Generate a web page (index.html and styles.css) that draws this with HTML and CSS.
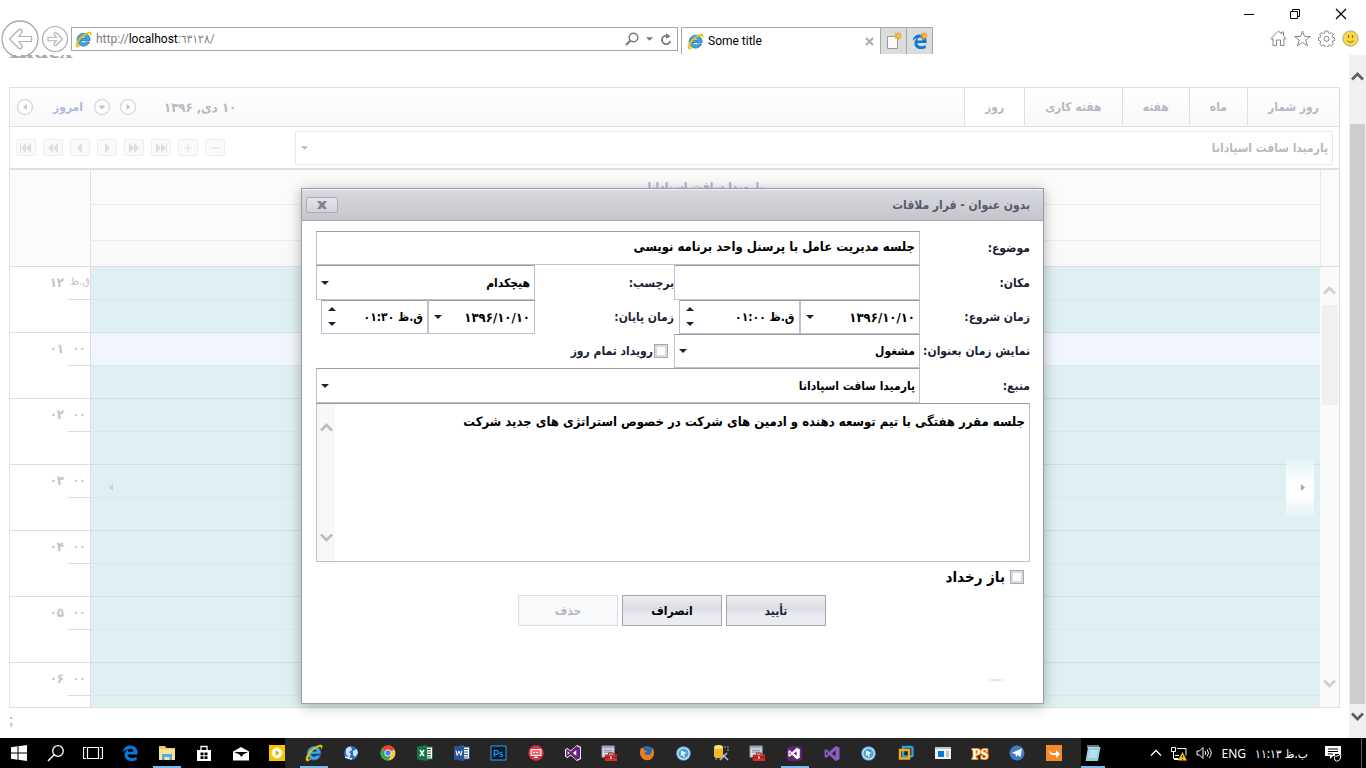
FILE: index.html
```html
<!DOCTYPE html>
<html lang="fa">
<head>
<meta charset="utf-8">
<title>Some title</title>
<link rel="stylesheet" href="styles.css">
</head>
<body>
<svg class="defs" aria-hidden="true">
  <defs>
    <symbol id="ie" viewBox="0 0 18 18"><path d="M9 2.400a6.800 6.800 0 1 0 6.400 9.200h-4a3.100 3.100 0 0 1-5.400-1.600h9.900A6.800 6.800 0 0 0 9 2.400zM6.100 7.500a3 3 0 0 1 5.800 0z" fill="#3fa9e0" stroke="#2277b5" stroke-width=".9"/><path d="M1.600 16.800C-.4 14.700 3 8 8.500 4.200 12 1.700 16 .2 17 1.600c.6 1-.2 2.500-.7 3.400C17 2.600 15 2 11.400 4 6 7 1.800 13 3.200 15.300c.5.800 1.800.4 2.600 0-1.700 1.200-3.300 2.200-4.200 1.500z" fill="#fbc912" stroke="#e9b400" stroke-width=".6"/></symbol>
    <symbol id="edge" viewBox="0 0 16 16"><path d="M.6 7.300C1.200 3 4.200.5 8.300.5c4.500 0 7.200 3.200 7.200 7v2.100H5.600c.1 2.300 2 3.500 4.500 3.500 1.700 0 3.100-.4 4.500-1.300v3.100c-1.500.8-3.100 1.100-5 1.100-4.400 0-7-2.600-7-6.200 0-2.400 1.200-4.400 3.400-5.400C3.600 4.700 1.600 5.600.6 7.300zM5.700 6.800h5.600c0-2-1-3-2.800-3S6 5 5.700 6.800z" fill="#0a78d7"/></symbol>
    <symbol id="spark" viewBox="0 0 8 8"><path d="M4 0v8M0 4h8M1.200 1.200l5.600 5.600M6.800 1.200L1.200 6.800" stroke="#f0981c" stroke-width="1.200"/><circle cx="4" cy="4" r="1.600" fill="#ffc545"/></symbol>
    <symbol id="down" viewBox="0 0 8 4"><path d="M0 0h8L4 4z" fill="currentColor"/></symbol>
    <symbol id="up" viewBox="0 0 8 4"><path d="M0 4h8L4 0z" fill="currentColor"/></symbol>
    <symbol id="chev-down" viewBox="0 0 13 10"><path d="M1 1.500l5.500 5.500L12 1.500" fill="none" stroke="currentColor" stroke-width="2.800"/></symbol>
    <symbol id="chev-up" viewBox="0 0 13 10"><path d="M1 8.500L6.500 3 12 8.500" fill="none" stroke="currentColor" stroke-width="2.800"/></symbol>
    <symbol id="toolbox" viewBox="0 0 18 18"><path d="M1 1h13v12H1z" fill="#dfe3ea" stroke="#7f8896"/><path d="M1 1h13v2.500H1z" fill="#9aa5b8"/><path d="M3 5.500h9M3 7.500h9" stroke="#77818f"/><path d="M4 10h13v7H4z" fill="#d22f2b"/><path d="M8 10V8.500h5V10M4 13h13" stroke="#7a0f0d" fill="none"/><path d="M9.500 12h2v2.500h-2z" fill="#f3d9d8"/></symbol>
    <symbol id="disc" viewBox="0 0 18 18"><circle cx="9" cy="9" r="7.800" fill="#4d9fd0"/><circle cx="9" cy="9" r="6" fill="none" stroke="#cfe6f4" stroke-width="1.300"/><path d="M6.500 5.500l6 3.300-3 .8 1 2.900-1.500.5-1-2.700-2 1.700z" fill="#e8f4fb"/></symbol>
    <symbol id="vs" viewBox="0 0 18 18"><path d="M12.800 1L17 3v12l-4.200 2-6.600-6.200L3 13.500 1.200 12.700V5.300L3 4.500l3.200 2.700zM12.700 5.800L8.700 9l4 3.200zM3 7v4l2-2z" fill="currentColor" fill-rule="evenodd"/></symbol>
  </defs>
</svg>

<header class="chrome">
  <div class="caption">
    <button class="plain" aria-label="Minimize"><svg width="12" height="12"><path d="M1 6.500h10" stroke="#000"/></svg></button>
    <button class="plain" aria-label="Restore"><svg width="12" height="12"><path d="M1.500 3.500h7v7h-7zM3.500 3.500v-2h7v7h-2" stroke="#000" fill="none"/></svg></button>
    <button class="plain" aria-label="Close"><svg width="12" height="12"><path d="M1 1l10 10M11 1L1 11" stroke="#000" stroke-width="1.200"/></svg></button>
  </div>
  <div class="navbar">
    <button class="plain" aria-label="Back"><svg width="38" height="38"><circle cx="19" cy="19" r="18" fill="#fff" stroke="#aaa" stroke-width="1.300"/><path d="M8.500 19l9-9c2-2 5 1 3 3L18 16.500h12.500v5H18l2.500 3.500c2 2-1 5-3 3z" fill="none" stroke="#b0b0b0" stroke-width="1.200"/></svg></button>
    <button class="plain" aria-label="Forward"><svg width="28" height="28"><circle cx="14" cy="14" r="12.500" fill="#fff" stroke="#aaa" stroke-width="1.200"/><path d="M21.500 14l-6-6c-1.500-1.500-3.500.6-2 2l2 2.200H7v3.600h8.500l-2 2.200c-1.500 1.400.5 3.500 2 2z" fill="none" stroke="#b0b0b0" stroke-width="1.100"/></svg></button>
    <div class="address">
      <svg width="17" height="17"><use href="#ie"/></svg>
      <span class="url">http://<b>localhost</b>:٦٣١٢٨/</span>
      <button class="plain" aria-label="Search"><svg width="14" height="14"><circle cx="8.500" cy="5.500" r="4.300" fill="none" stroke="#777" stroke-width="1.500"/><path d="M5.500 8.500L1 13" stroke="#777" stroke-width="2"/></svg></button>
      <button class="plain" aria-label="Search options"><svg class="gray" width="7" height="4"><use href="#down"/></svg></button>
      <button class="plain" aria-label="Refresh"><svg width="12" height="13"><path d="M8.500 3.200A4.300 4.300 0 1 0 10.400 8" fill="none" stroke="#777" stroke-width="1.700"/><path d="M6 0l4.500 3.700L6 5.500z" fill="#777"/></svg></button>
    </div>
    <div class="tab">
      <svg width="17" height="17"><use href="#ie"/></svg>
      <span>Some title</span>
      <button class="plain" aria-label="Close tab"><svg width="9" height="9"><path d="M1 1l7 7M8 1L1 8" stroke="#aaa" stroke-width="1.900"/></svg></button>
    </div>
    <button class="newtab" aria-label="New tab"><svg width="16" height="18"><path d="M1.500 4.500h10v12h-10z" fill="#fafafa" stroke="#999"/><svg x="8" y="0" width="8" height="8"><use href="#spark"/></svg></svg></button>
    <button class="newtab" aria-label="Open in Edge"><svg width="16" height="18"><svg y="2" width="15" height="15"><use href="#edge"/></svg><svg x="8" y="0" width="8" height="8"><use href="#spark"/></svg></svg></button>
    <div class="tools">
      <button class="plain" aria-label="Home"><svg width="17" height="17"><path d="M.8 8.500L8.500 1l3 3V2h2v4l2.700 2.500-1 1-1.200-1V15.500h-3.500V10h-4v5.500H3V8.500l-1.200 1z" fill="none" stroke="#888"/></svg></button>
      <button class="plain" aria-label="Favorites"><svg width="17" height="17"><path d="M8.500 1l2 5.500h5.800l-4.600 3.600 1.800 5.700-5-3.500-5 3.500 1.800-5.700L.7 6.500h5.800z" fill="none" stroke="#888"/></svg></button>
      <button class="plain" aria-label="Settings"><svg width="17" height="17"><path d="M7 1h3l.4 2 1.300.6 1.700-1.200 2 2-1.200 1.800.6 1.300 1.900.4v2.500l-1.900.5-.6 1.400 1.100 1.700-1.900 1.900-1.700-1.100-1.300.5-.4 1.900H7l-.4-1.900-1.300-.5-1.700 1.100-1.900-1.900 1.100-1.700-.6-1.400-1.800-.5V7.900l1.800-.4.600-1.300L1.700 4.400l2-2 1.600 1.200L6.600 3z" fill="none" stroke="#888"/><circle cx="8.500" cy="8.800" r="2.500" fill="none" stroke="#888"/></svg></button>
      <button class="plain" aria-label="Feedback"><svg width="17" height="17"><circle cx="8.500" cy="8.500" r="7.600" fill="#fbd93f" stroke="#a9a183"/><path d="M6.500 5v3M10.500 5v3" stroke="#8a7420" stroke-width="1.300"/><path d="M5 10.500q3.500 3.500 7 0" fill="none" stroke="#8a7420"/></svg></button>
    </div>
  </div>
</header>

<main class="viewport">
  <div class="page">
    <h1 class="heading">Index</h1>
    <section class="scheduler" dir="rtl">
      <div class="toolbar">
        <nav class="views">
          <button>روز شمار</button><button>ماه</button><button>هفته</button><button>هفته کاری</button><button class="active">روز</button>
        </nav>
        <div class="daynav" dir="ltr">
          <button class="plain" aria-label="Previous"><svg width="18" height="18"><circle cx="9" cy="9" r="7.500" fill="#fff" stroke="#dcdcdc" stroke-width="1.500"/><path d="M11 6v6L7 9z" fill="#c4c4c8"/></svg></button>
          <a href="#" dir="rtl">امروز</a>
          <button class="plain" aria-label="Choose date"><svg width="18" height="18"><circle cx="9" cy="9" r="7.500" fill="#fff" stroke="#dcdcdc" stroke-width="1.500"/><path d="M5.500 7.500h7l-3.500 4z" fill="#c4c4c8"/></svg></button>
          <button class="plain" aria-label="Next"><svg width="18" height="18"><circle cx="9" cy="9" r="7.500" fill="#fff" stroke="#dcdcdc" stroke-width="1.500"/><path d="M7.500 6v6L11.500 9z" fill="#c4c4c8"/></svg></button>
          <span class="date" dir="rtl">۱۰ دی, ۱۳۹۶</span>
        </div>
      </div>
      <div class="resources">
        <div class="combo">
          <select aria-label="منبع"><option>پارمیدا سافت اسپادانا</option></select>
          <svg width="7" height="4"><use href="#down"/></svg>
        </div>
        <div class="pager" dir="ltr">
          <button aria-label="First"><svg width="14" height="10"><path d="M1 0h1v10H1zM7 0v10L2 5zM12 0v10L7 5z"/></svg></button>
          <button aria-label="Previous page"><svg width="14" height="10"><path d="M7 0v10L2 5zM12 0v10L7 5z"/></svg></button>
          <button aria-label="Previous"><svg width="14" height="10"><path d="M9 0v10L4 5z"/></svg></button>
          <button aria-label="Next"><svg width="14" height="10"><path d="M5 0v10l5-5z"/></svg></button>
          <button aria-label="Next page"><svg width="14" height="10"><path d="M2 0v10l5-5zM7 0v10l5-5z"/></svg></button>
          <button aria-label="Last"><svg width="14" height="10"><path d="M2 0v10l5-5zM7 0v10l5-5zM12 0h1v10h-1z"/></svg></button>
          <button aria-label="Add"><svg width="14" height="10"><path d="M3 4.500h8v1H3zM6.500 1h1v8h-1z"/></svg></button>
          <button aria-label="Remove"><svg width="14" height="10"><path d="M3 4.500h8v1H3z"/></svg></button>
        </div>
      </div>
      <div class="bands" dir="ltr">
        <div class="corner"></div>
        <div class="bandlist"><div dir="rtl">پارمیدا سافت اسپادانا</div><div></div><div></div></div>
        <div class="bandend"></div>
      </div>
      <div class="body" dir="ltr">
        <table class="hours">
          <tr><th rowspan="2">۱۲</th><td class="min ap" dir="rtl">ق.ظ</td><td class="slot"></td></tr>
          <tr><td class="min"></td><td class="slot full"></td></tr>
          <tr><th rowspan="2">۰۱</th><td class="min">۰۰</td><td class="slot picked"></td></tr>
          <tr><td class="min"></td><td class="slot full"></td></tr>
          <tr><th rowspan="2">۰۲</th><td class="min">۰۰</td><td class="slot"></td></tr>
          <tr><td class="min"></td><td class="slot full"></td></tr>
          <tr><th rowspan="2">۰۳</th><td class="min">۰۰</td><td class="slot"></td></tr>
          <tr><td class="min"></td><td class="slot full"></td></tr>
          <tr><th rowspan="2">۰۴</th><td class="min">۰۰</td><td class="slot"></td></tr>
          <tr><td class="min"></td><td class="slot full"></td></tr>
          <tr><th rowspan="2">۰۵</th><td class="min">۰۰</td><td class="slot"></td></tr>
          <tr><td class="min"></td><td class="slot full"></td></tr>
          <tr><th rowspan="2">۰۶</th><td class="min">۰۰</td><td class="slot"></td></tr>
          <tr><td class="min"></td><td class="slot full"></td></tr>
        </table>
        <div class="scroll pale"><svg width="13" height="10"><use href="#chev-up"/></svg><div class="thumb"></div><svg width="13" height="10"><use href="#chev-down"/></svg></div>
        <button class="jump prev" aria-label="Previous appointment"><svg width="4" height="7"><path d="M4 0v7L0 3.500z" fill="#c5d2d4"/></svg></button>
        <button class="jump next" aria-label="Next appointment"><svg width="4" height="7"><path d="M0 0v7l4-3.500z" fill="#a8a8b0"/></svg></button>
      </div>
    </section>
    <p class="tail">;</p>
  </div>

  <div class="overlay">
    <form class="dialog" dir="rtl" role="dialog" aria-labelledby="dlg-title">
      <div class="dlg-head">
        <h2 id="dlg-title">بدون عنوان - قرار ملاقات</h2>
        <button type="button" class="close" aria-label="بستن"><svg width="10" height="8"><path d="M0 0h3.500L5 2l1.500-2H10L7 4l3 4H6.500L5 6 3.500 8H0l3-4z" fill="#83838f"/></svg></button>
      </div>
      <div class="fields">
        <label for="subject">موضوع:</label>
        <div class="box wide subject"><input id="subject" type="text" value="جلسه مدیریت عامل با پرسنل واحد برنامه نویسی"></div>

        <label for="place">مکان:</label>
        <div class="box"><input id="place" type="text"></div>
        <label for="tag">برچسب:</label>
        <div class="box pick"><select id="tag"><option>هیچکدام</option></select><svg width="8" height="4"><use href="#down"/></svg></div>

        <label for="start">زمان شروع:</label>
        <div class="pair">
          <div class="box date-box"><input id="start" type="text" value="۱۳۹۶/۱۰/۱۰"><button type="button" class="drop" aria-label="تقویم"><svg width="8" height="4"><use href="#down"/></svg></button></div>
          <div class="box time-box"><input type="text" aria-label="ساعت شروع" value="ق.ظ ۰۱:۰۰"><span class="spin"><button type="button" class="plain" aria-label="بیشتر"><svg width="8" height="4"><use href="#up"/></svg></button><button type="button" class="plain" aria-label="کمتر"><svg width="8" height="4"><use href="#down"/></svg></button></span></div>
        </div>
        <label for="end">زمان پایان:</label>
        <div class="pair">
          <div class="box date-box"><input id="end" type="text" value="۱۳۹۶/۱۰/۱۰"><button type="button" class="drop" aria-label="تقویم"><svg width="8" height="4"><use href="#down"/></svg></button></div>
          <div class="box time-box"><input type="text" aria-label="ساعت پایان" value="ق.ظ ۰۱:۳۰"><span class="spin"><button type="button" class="plain" aria-label="بیشتر"><svg width="8" height="4"><use href="#up"/></svg></button><button type="button" class="plain" aria-label="کمتر"><svg width="8" height="4"><use href="#down"/></svg></button></span></div>
        </div>

        <label for="showas">نمایش زمان بعنوان:</label>
        <div class="box pick"><select id="showas"><option>مشغول</option></select><svg width="8" height="4"><use href="#down"/></svg></div>
        <div class="check allday"><input id="allday" type="checkbox"><label for="allday">رویداد تمام روز</label></div>

        <label for="resource">منبع:</label>
        <div class="box wide pick"><select id="resource"><option>پارمیدا سافت اسپادانا</option></select><svg width="8" height="4"><use href="#down"/></svg></div>

        <div class="box memo">
          <textarea aria-label="توضیحات">جلسه مقرر هفتگی با تیم توسعه دهنده و ادمین های شرکت در خصوص استراتژی های جدید شرکت</textarea>
          <div class="scroll"><svg width="13" height="10"><use href="#chev-up"/></svg><svg width="13" height="10"><use href="#chev-down"/></svg></div>
        </div>
      </div>
      <div class="check recur"><input id="recur" type="checkbox"><label for="recur">باز رخداد</label></div>
      <div class="actions">
        <button type="submit">تأیید</button><button type="button" class="cancel">انصراف</button><button type="button" disabled>حذف</button>
      </div>
      <div class="status"></div>
    </form>
  </div>

  <div class="pagescroll"><svg width="13" height="10"><use href="#chev-up"/></svg><div class="thumb"></div><svg width="13" height="10"><use href="#chev-down"/></svg></div>
</main>

<footer class="taskbar">
  <button aria-label="Start"><svg width="16" height="16"><path d="M0 2.300L6.500 1.300V7.500H0zM7.500 1.200L16 0v7.500H7.500zM0 8.500h6.500v6.200L0 13.800zM7.500 8.500H16V16l-8.500-1.200z" fill="#fff"/></svg></button>
  <button aria-label="Search"><svg width="18" height="18"><circle cx="11" cy="7" r="5.300" fill="none" stroke="#fff" stroke-width="1.300"/><path d="M7.200 10.800L1 17" stroke="#fff" stroke-width="1.500"/></svg></button>
  <button aria-label="Task view"><svg width="20" height="16"><path d="M4.500 2.500h11v11h-11zM3 2.500H.5v11H3M17 2.500h2.500v11H17" fill="none" stroke="#fff" stroke-width="1.200"/></svg></button>
  <button aria-label="Edge"><svg width="16" height="16"><use href="#edge"/></svg></button>
  <button class="running" aria-label="File Explorer"><svg width="18" height="16"><path d="M1 1h6l1.500 2H17v12H1z" fill="#f4c95c"/><path d="M1 4h16v11H1z" fill="#fde294"/><path d="M4 15V9h10v6h-2.500v-3h-5v3z" fill="#4aaee8"/></svg></button>
  <button aria-label="Store"><svg width="16" height="17"><path d="M1 5h14v11H1z" fill="#fff"/><path d="M5 5V1.500h6V5" fill="none" stroke="#fff" stroke-width="1.300"/><path d="M4.500 7.500h3v2.700h-3zM8.500 7.500h3v2.700h-3zM4.500 11.200h3V14h-3zM8.500 11.200h3V14h-3z" fill="#000"/></svg></button>
  <button aria-label="Mail"><svg width="16" height="15"><path d="M0 5.500L8 1l8 4.500V14.500H0z" fill="#fff"/><path d="M1 6h14l-5 2.500-1 2H8l-1.500-2z" fill="#000"/></svg></button>
  <button class="clipped" aria-label="Media"><svg width="16" height="16"><path d="M0 0h16v16H0z" fill="#f5c400"/><circle cx="8" cy="8" r="5" fill="#fff" stroke="#fff4b8"/><path d="M6.500 5l4 3-4 3z" fill="#e0b000"/></svg></button>
  <div class="quick">
    <button class="running" aria-label="Internet Explorer"><svg width="18" height="18"><use href="#ie"/></svg></button>
    <button aria-label="Globe"><svg width="16" height="16"><circle cx="8" cy="8" r="7" fill="#2b6fc4"/><path d="M3 4q3-3 5-2l1 3-3 2 2 2-2 4-3-4zM10 6l4-2 1 4-3 4-2-2z" fill="#cfe2f2"/><path d="M2 12l7 2" stroke="#e9f1f8" stroke-width="1.500"/></svg></button>
    <button aria-label="Chrome"><svg width="16" height="16"><circle cx="8" cy="8" r="7.500" fill="#fcc934"/><path d="M8 8L1.500 4.250A7.500 7.500 0 0 1 14.500 4.250z" fill="#ea4335"/><path d="M8 8L1.500 4.250A7.500 7.500 0 0 0 8 15.500l3.200-5.500z" fill="#34a853"/><circle cx="8" cy="8" r="3.500" fill="#fff"/><circle cx="8" cy="8" r="2.700" fill="#4285f4"/></svg></button>
    <button aria-label="Excel"><svg width="16" height="16"><path d="M8 2h7.500v12H8z" fill="#fff" stroke="#1f7246"/><path d="M10 4.500h4M10 7h4M10 9.500h4M10 12h4" stroke="#1f7246"/><path d="M0 1.500L10 0v16L0 14.500z" fill="#1f7246"/><path d="M3 5l4 6M7 5l-4 6" stroke="#fff" stroke-width="1.400"/></svg></button>
    <button aria-label="Word"><svg width="16" height="16"><path d="M8 2h7.500v12H8z" fill="#fff" stroke="#2a5699"/><path d="M10 4.500h4M10 7h4M10 9.500h4M10 12h4" stroke="#2a5699"/><path d="M0 1.500L10 0v16L0 14.500z" fill="#2a5699"/><path d="M2 5.500l1.200 5 1.800-4.500 1.800 4.500L8 5.500" stroke="#fff" fill="none"/></svg></button>
    <button aria-label="Photoshop"><svg width="17" height="16"><path d="M1 1h15v14H1z" fill="#001d33" stroke="#2fa8e8"/><text x="3" y="12" font-family="Lato" font-size="10" fill="#38b4f5">Ps</text></svg></button>
    <button aria-label="Remote"><svg width="16" height="16"><circle cx="8" cy="8" r="7.700" fill="#d9333f"/><path d="M3 4.500h10v6H3zM6 12.500h4M8 10.500v2" fill="#e77079" stroke="#fff"/><path d="M5 7.500h6" stroke="#fff" stroke-dasharray="2 1"/></svg></button>
    <button aria-label="Visual Studio 2012"><svg width="18" height="18"><path d="M13 1l4 2v12l-4 2-6.500-5.500L3.500 14 1 12.500v-7L3.500 4l3 2.500z" fill="#fff"/><svg x="1" y="1" width="16" height="16" color="#68217a"><use href="#vs"/></svg></svg></button>
    <button aria-label="Configuration"><svg width="17" height="17"><use href="#toolbox"/></svg></button>
    <button aria-label="Firefox"><svg width="16" height="16"><circle cx="8" cy="8" r="7" fill="#2a66b1"/><path d="M2 3C0 7 1 12 4.500 14.200 9 17 15 14 15 8c0-3-1-4.500-2.500-5.500C13.500 5 13 8 11 9.500 8.500 11 6 9.500 5.500 8L8 6.500 5 5 4 3z" fill="#ee7c1b"/></svg></button>
    <button aria-label="Agent"><svg width="17" height="17"><use href="#disc"/></svg></button>
    <button aria-label="Database"><svg width="18" height="18"><path d="M2 3v9c0 3 9 3 9 0V3z" fill="#f3b72a"/><ellipse cx="6.500" cy="3" rx="4.500" ry="2" fill="#ffe07a"/><path d="M12 3h4v4M3 15h3" stroke="#4e9a4e" stroke-width="1.500" stroke-dasharray="2 1" fill="none"/><path d="M8 16l7-7M10 10l6 6" stroke="#b6bcc4" stroke-width="1.600"/></svg></button>
    <button aria-label="Configuration 2"><svg width="17" height="17"><use href="#toolbox"/></svg></button>
    <button class="running" aria-label="Visual Studio"><svg width="17" height="17"><path d="M12 1l4 2v11l-4 2H3L1 13V4l2-2z" fill="#68217a"/><svg x="1" y="2" width="14" height="13" color="#fff"><use href="#vs"/></svg></svg></button>
    <button aria-label="Visual Studio 2017"><svg class="violet" width="18" height="17"><use href="#vs"/></svg></button>
    <button aria-label="Agent 2"><svg width="17" height="17"><use href="#disc"/></svg></button>
    <button aria-label="VMware"><svg width="16" height="16"><path d="M5 2h8q1.500 0 1.500 1.500V10q0 1.500-1.500 1.500H5z" fill="none" stroke="#28a6d4" stroke-width="2.400"/><path d="M2 5v8.500h9V5z" fill="none" stroke="#f6a821" stroke-width="2.400"/></svg></button>
    <button aria-label="Window"><svg width="16" height="12"><path d="M0 0h16v12H0z" fill="#f3f3f3"/><path d="M0 0h16v2H0z" fill="#bfc5cc"/><path d="M3 4h6v6H3z" fill="#0a78d7"/><path d="M11 5h3M11 7h3M11 9h3" stroke="#999"/></svg></button>
    <button aria-label="PS"><svg width="18" height="18"><text x="1" y="15" font-family="Liberation Serif" font-weight="bold" font-size="14" fill="#fff" stroke="#f08a1c" stroke-width="2" paint-order="stroke">PS</text></svg></button>
    <button aria-label="Telegram"><svg width="16" height="16"><circle cx="8" cy="8" r="7.500" fill="#3c7ec9"/><path d="M2.500 8L13 3.500 11.500 12 8.500 10 7 12.200 6.500 9z" fill="#fff"/></svg></button>
    <button aria-label="Arrow"><svg width="16" height="16"><path d="M0 0h16v16H0z" fill="#f48b28"/><path d="M3 5q1 3 4 3h3V5l4 4-4 4v-3H7Q3 10 3 5z" fill="#fff"/></svg></button>
  </div>
  <button class="notes running" aria-label="Notepad"><svg width="16" height="17"><path d="M3 2h12.500L13 16H.5z" fill="#8fd0dd"/><path d="M4 6h9M3.700 8h9M3.300 10h9M3 12h9" stroke="#d8f0f4"/><path d="M3 0v3M5 0v3M7 0v3M9 0v3M11 0v3M13 0v3" stroke="#e8e8e8"/></svg></button>
  <div class="tray">
    <svg width="12" height="8"><path d="M1 6.500l5-5 5 5" fill="none" stroke="#fff" stroke-width="1.300"/></svg>
    <svg width="16" height="15"><path d="M.5 1.500h4v4h-4zM6 2.500h9v7M4 9.500h4M2.500 5.500v7h5M3 13.500h5" fill="none" stroke="#fff"/><path d="M11.500 6L16 14.500H7z" fill="#fdc116"/><path d="M11.500 9v3M11.500 13v1" stroke="#3d2c00"/></svg>
    <svg width="17" height="14"><path d="M1 5h2.500L7 1.500v11L3.500 9H1z" fill="none" stroke="#fff"/><path d="M9 5q1.500 2 0 4M11 3.500q3 3.500 0 7M13 2q4.500 5 0 10" fill="none" stroke="#fff"/></svg>
    <span>ENG</span>
    <time dir="rtl">ب.ظ ۱۱:۱۳</time>
    <svg class="notice" width="17" height="17"><path d="M0 1h16v10H8l-3 3v-3H0z" fill="#fff"/><path d="M3 4h10M3 6.500h10M3 9h5" stroke="#000"/><path d="M10 9h6v7h-6z" fill="#000"/><path d="M10 15q-2-4 2-4 3 0 3-3 2 6-2 8-2 .6-3-1z" fill="none" stroke="#fff"/></svg>
    <i class="peek"></i>
  </div>
</footer>
</body>
</html>
```
FILE: styles.css
```css
* { box-sizing: border-box; }
body {
  margin: 0;
  height: 100vh;
  display: flex;
  flex-direction: column;
  background: #fff;
  font-family: "DejaVu Sans Condensed", "DejaVu Sans", sans-serif;
  font-size: 12px;
  overflow: hidden;
}
button, input, select, textarea { font: inherit; color: inherit; margin: 0; }
svg { display: block; flex: none; }
.defs { position: absolute; width: 0; height: 0; }
.plain { border: 0; padding: 0; background: none; display: flex; align-items: center; justify-content: center; }

/* browser frame */
.chrome { flex: none; font-family: Roboto, "DejaVu Sans Condensed", "DejaVu Sans", sans-serif; font-size: 12px; }
.caption { height: 27px; display: flex; justify-content: flex-end; gap: 34px; padding: 8px 19px 7px 0; }
.navbar { height: 28px; display: flex; align-items: flex-start; padding: 0 7px 0 1px; }
.navbar > .plain { height: 24px; }
.navbar > .plain + .plain { margin: 0 2px; }
.address {
  flex: 1;
  height: 24px;
  display: flex;
  align-items: center;
  gap: 7px;
  padding: 0 5px 0 3px;
  border: 1px solid #a8a8a8;
}
.url { flex: 1; margin-left: -3px; color: #808080; }
.url b { font-weight: 400; color: #000; }
.gray { color: #777; }
.tab {
  width: 200px;
  height: 27px;
  margin-left: 3px;
  display: flex;
  align-items: center;
  gap: 4px;
  padding: 0 6px 0 5px;
  border: 1px solid #a8a8a8;
  border-bottom: 0;
}
.tab span { flex: 1; }
.newtab {
  width: 26px;
  height: 27px;
  padding: 0;
  display: flex;
  align-items: center;
  justify-content: center;
  background: #dcdcdc;
  border: solid #a8a8a8;
  border-width: 1px 1px 0 0;
}
.tools { width: 426px; display: flex; justify-content: flex-end; gap: 7px; padding-top: 3px; }

/* page */
.viewport { flex: 1; min-height: 0; display: flex; position: relative; overflow: hidden; }
.page { flex: 1; min-width: 0; padding: 0 9px; }
.heading {
  margin: -18px 0 25px;
  font: bold 26px/25px "Liberation Serif", serif;
  color: #aaa;
}
.scheduler { border: 1px solid #e0e0e0; color: #b8b8c0; font-weight: 700; }
.toolbar {
  height: 39px;
  display: flex;
  justify-content: space-between;
  background: linear-gradient(#fff, #f8f8fb);
  border-bottom: 1px solid #e0e0e0;
}
.views { display: flex; }
.views button { border: 0; border-left: 1px solid #e0e0e0; background: none; padding: 0 20px; }
.views .active { background: #fff; }
.daynav { display: flex; align-items: center; padding-left: 6px; font-size: 13px; }
.daynav a { margin: 0 10px 0 16px; width: 33px; font-size: 12px; color: #aebade; text-decoration: none; }
.daynav .plain + .plain { margin-left: 8px; }
.date { margin-left: 27px; }
.resources {
  height: 43px;
  display: flex;
  align-items: center;
  gap: 70px;
  padding: 0 6px;
  border-bottom: 2px solid #e0e0e0;
}
.combo { flex: 1; height: 34px; display: grid; align-items: center; border: 1px solid #e8e8e8; }
.combo select, .combo svg { grid-area: 1 / 1; }
.combo svg { justify-self: end; margin-left: 5px; pointer-events: none; }
select {
  appearance: none;
  width: 100%;
  height: 100%;
  min-width: 0;
  border: 0;
  border-radius: 0;
  padding: 0 4px;
  background: none;
  opacity: 1;
}
.pager { display: flex; gap: 7px; }
.pager button { width: 20px; height: 17px; padding: 0; display: grid; place-items: center; border: 1px solid #eee; border-radius: 2px; background: #fafafa; }
.pager path { fill: #dedee2; }
.bands { display: flex; height: 97px; background: #fbfbfb; border-bottom: 1px solid #dedede; }
.corner { width: 81px; border-right: 1px solid #e0e0e0; }
.bandlist { flex: 1; display: grid; grid-template-rows: 35px 36px 25px; text-align: center; line-height: 35px; }
.bandlist div { border-bottom: 1px solid #ececec; }
.bandlist div:last-child { background: #f9f9f9; border: 0; }
.bandend { width: 19px; border-left: 1px solid #e8e8e8; }
.body { display: flex; height: 440px; overflow: hidden; position: relative; }
.hours { flex: 1; border-spacing: 0; table-layout: fixed; align-self: flex-start; }
.hours th { width: 58px; height: 66px; padding: 8px 4px 0 0; font-size: 13px; text-align: right; vertical-align: top; color: #c4c4c4; border-bottom: 1px solid #dedede; }
.hours td { height: 33px; padding: 0; }
.hours .min { width: 23px; font-size: 12px; text-align: center; vertical-align: top; padding-top: 8px; color: #c4c4c4; border: solid #dedede; border-width: 0 1px 1px 0; white-space: nowrap; }
.hours .ap { font-size: 11px; font-weight: 400; }
.hours .slot { background: #dff0f3; border-bottom: 1px solid #d9e9e8; }
.hours .full { border-bottom-color: #d2dedf; }
.hours .picked { background: #f1f6fe; }
.scroll { width: 18px; display: flex; flex-direction: column; align-items: center; justify-content: space-between; padding: 18px 0; background: #f8f8f8; color: #bfbfbf; }
.pale { width: 19px; background: #fafafa; color: #d0d0d0; }
.pale .thumb { flex: 0 0 100px; width: 16px; margin: 10px 0 auto; background: #f0f0f0; }
.jump { position: absolute; top: 192px; width: 28px; height: 57px; padding: 0; display: grid; place-items: center; border: 0; background: none; }
.prev { left: 87px; }
.next { right: 25px; padding-left: 5px; background: linear-gradient(#e4f2f5, #fff 40%, #fff 65%, #e4f2f5); }
.tail { margin: 3px 0; font: 16px/18px "Liberation Serif", serif; color: #aaa; }
.pagescroll { width: 17px; display: flex; flex-direction: column; align-items: center; padding: 16px 0; background: #f0f0f0; color: #606060; }
.pagescroll .thumb { flex: 1; width: 15px; margin: 43px 0 8px; background: #cdcdcd; }

/* appointment dialog */
.overlay { position: absolute; inset: 0 17px 0 0; display: flex; justify-content: center; align-items: flex-start; padding: 133px 4px 0 0; }
.dialog { width: 743px; height: 516px; background: #fff; border: 1px solid #9c9caa; box-shadow: 0 2px 12px rgba(0, 0, 0, .3); color: #201f35; font-weight: 700; }
.dlg-head { height: 32px; display: flex; align-items: center; justify-content: space-between; padding: 0 13px 0 4px; background: linear-gradient(#dadbe0, #c5c5cd); border: solid #a9acb5; border-width: 0 0 1px; box-shadow: inset 0 1px #f0f0f6; }
.dlg-head h2 { margin: 0; font-size: 12px; color: #5a5a68; }
.close { width: 32px; height: 16px; padding: 0; display: grid; place-items: center; border: 1px solid #a9abb6; border-radius: 2px; background: linear-gradient(#e4e4ea, #d2d2da); }
.fields { display: grid; grid-template-columns: 110px 246px 139px 219px; grid-template-rows: 34px 35px 34px 34px 35px 159px; margin: 10px 13px 0 14px; align-items: stretch; }
.fields > label { align-self: center; white-space: nowrap; }
.wide { grid-column: 2 / 5; }
.box { display: flex; min-width: 0; border: 1px solid #c0c1ca; border-top-color: #9a9ba8; background: #fff; color: #000; }
.box input { flex: 1; width: 100%; min-width: 0; border: 0; padding: 0 4px; background: none; }
.subject { font-size: 13px; }
.subject input { padding-bottom: 4px; }
.pick { display: grid; align-items: center; }
.pick select, .pick svg { grid-area: 1 / 1; }
.pick svg { justify-self: end; margin-left: 4px; pointer-events: none; }
.box svg { color: #201f35; }
.pair { display: flex; margin-left: 5px; }
.date-box, .time-box { flex: 1; }
.date-box { font-size: 13px; }
.drop { width: 18px; padding: 0; display: grid; place-items: center; border: 0; background: none; }
.spin { width: 20px; display: flex; flex-direction: column; justify-content: space-between; align-items: center; padding: 6px 0 7px; }
.check { display: flex; align-items: center; }
.check input { appearance: none; width: 14px; height: 14px; border: 1px solid #a5a9b4; background: #fff; box-shadow: inset 0 0 0 2px #d7dae0; }
.allday { grid-column: 3 / 5; padding-right: 6px; gap: 1px; }
.memo { grid-column: 1 / 5; font-size: 13px; }
.memo textarea { flex: 1; border: 0; resize: none; padding: 9px 4px; line-height: 18px; overflow: hidden; background: none; }
.memo .scroll { color: #bfbfbf; }
.memo .scroll svg { color: inherit; }
.recur { margin: 5px 19px 0; gap: 5px; height: 20px; color: #000; font-size: 15px; }
.actions { display: flex; justify-content: center; gap: 4px; margin: 8px 0 0; padding-right: 1px; }
.actions button { width: 100px; height: 31px; border: 1px solid #a6a7b4; background: linear-gradient(#eeeef3, #dcdde4 45%, #e9eaf0 60%, #ecedf3); }
.actions .cancel { color: #000; }
.actions button:disabled { color: #b8b8be; border-color: #dedfe3; background: #f8f9fb; }
.status { width: 20px; height: 2px; margin: 53px 37px 0; background: radial-gradient(closest-side, #c4c4c4, #fff); }

/* taskbar */
.taskbar { flex: none; height: 30px; display: flex; background: #000; color: #fff; font: 12px "Noto Sans", "DejaVu Sans Condensed", "DejaVu Sans", sans-serif; }
.taskbar button { flex: none; width: 37px; height: 30px; padding: 0; display: grid; place-items: center; border: 0; background: none; }
.taskbar .clipped { width: 26px; justify-content: end; overflow: hidden; }
.running { background: linear-gradient(#76b9ed, #76b9ed) center bottom / 28px 2px no-repeat !important; }
.quick { flex: none; display: flex; padding: 0 9px 0 10px; background: #262626; }
.taskbar .notes { width: 24px; }
.violet { color: #865fc5; }
.tray { flex: 1; display: flex; align-items: center; justify-content: flex-end; gap: 9px; padding-right: 4px; white-space: nowrap; }
.notice { margin-left: 8px; }
.peek { width: 1px; height: 30px; margin-left: 10px; background: #555; }
```
